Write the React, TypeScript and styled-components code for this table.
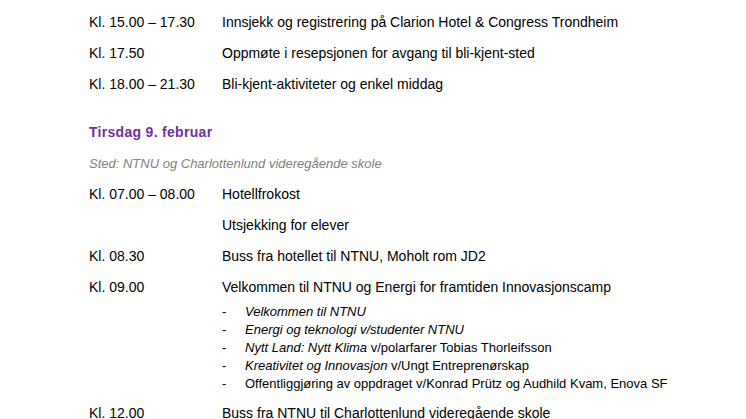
import React from 'react';
import styled, { createGlobalStyle } from 'styled-components';

const GlobalStyle = createGlobalStyle`
  html, body {
    margin: 0;
    padding: 0;
    background: #fff;
  }
  body {
    font-family: "Liberation Sans", Arial, sans-serif;
    font-size: 13px;
    color: #000;
  }
`;

const Page = styled.div`
  width: 746px;
  height: 419px;
  overflow: hidden;
  padding: 7px 0 0 89px;
  box-sizing: border-box;
`;

const Row = styled.div<{ $top?: number }>`
  display: grid;
  grid-template-columns: 133px 1fr;
  font-size: 14px;
  line-height: 31px;
  height: 31px;
  margin-top: ${(p) => p.$top ?? 0}px;
  white-space: nowrap;
`;

const Time = styled.span``;
const What = styled.span``;

const DayTitle = styled.h2`
  margin: 17px 0 0;
  font-size: 14px;
  font-weight: bold;
  color: #7030a0;
  line-height: 31px;
  letter-spacing: 0.3px;
`;

const Place = styled.p`
  margin: 0;
  font-style: italic;
  color: #808080;
  line-height: 31px;
`;

const SubList = styled.ul`
  list-style: none;
  margin: 0 0 0 133px;
  padding: 0;
`;

const SubItem = styled.li`
  display: flex;
  line-height: 18px;
  white-space: nowrap;

  &::before {
    content: '-';
    width: 23px;
    flex: none;
  }
`;

const Em = styled.em`
  font-style: italic;
`;

type Item = { time: string; text: string };

const monday: Item[] = [
  { time: 'Kl. 15.00 – 17.30', text: 'Innsjekk og registrering på Clarion Hotel & Congress Trondheim' },
  { time: 'Kl. 17.50', text: 'Oppmøte i resepsjonen for avgang til bli-kjent-sted' },
  { time: 'Kl. 18.00 – 21.30', text: 'Bli-kjent-aktiviteter og enkel middag' },
];

const tuesday: Item[] = [
  { time: 'Kl. 07.00 – 08.00', text: 'Hotellfrokost' },
  { time: '', text: 'Utsjekking for elever' },
  { time: 'Kl. 08.30', text: 'Buss fra hotellet til NTNU, Moholt rom JD2' },
  { time: 'Kl. 09.00', text: 'Velkommen til NTNU og Energi for framtiden Innovasjonscamp' },
];

export default function App() {
  return (
    <>
      <GlobalStyle />
      <Page>
        {monday.map((r) => (
          <Row key={r.time}>
            <Time>{r.time}</Time>
            <What>{r.text}</What>
          </Row>
        ))}

        <DayTitle>Tirsdag 9. februar</DayTitle>
        <Place>Sted: NTNU og Charlottenlund videregående skole</Place>

        {tuesday.map((r) => (
          <Row key={r.text}>
            <Time>{r.time}</Time>
            <What>{r.text}</What>
          </Row>
        ))}

        <SubList>
          <SubItem><Em>Velkommen til NTNU</Em></SubItem>
          <SubItem><Em>Energi og teknologi v/studenter NTNU</Em></SubItem>
          <SubItem><span><Em>Nytt Land: Nytt Klima</Em> v/polarfarer Tobias Thorleifsson</span></SubItem>
          <SubItem><span><Em>Kreativitet og Innovasjon</Em> v/Ungt Entreprenørskap</span></SubItem>
          <SubItem>Offentliggjøring av oppdraget v/Konrad Prütz og Audhild Kvam, Enova SF</SubItem>
        </SubList>

        <Row $top={5}>
          <Time>Kl. 12.00</Time>
          <What>Buss fra NTNU til Charlottenlund videregående skole</What>
        </Row>
      </Page>
    </>
  );
}
